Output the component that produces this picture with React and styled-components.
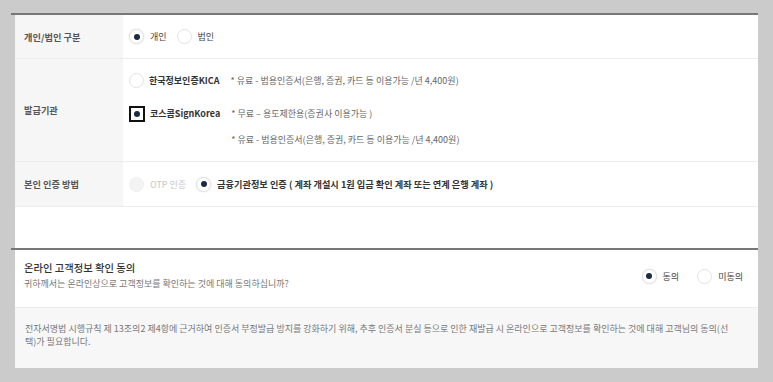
import styled, { createGlobalStyle } from "styled-components";

const GlobalStyle = createGlobalStyle`
  html, body {
    margin: 0;
    padding: 0;
    background: #cbcbcb;
  }
  body {
    font-family: "Noto Sans CJK KR", "Noto Sans", sans-serif;
    color: #444;
  }
`;

function Radio({ checked, disabled, focused }) {
  return (
    <RadioMark $checked={checked} $disabled={disabled} $focused={focused}>
      {checked ? <Dot /> : null}
    </RadioMark>
  );
}

function Choice({ checked, disabled, focused, children }) {
  return (
    <ChoiceLabel $disabled={disabled}>
      <Radio checked={checked} disabled={disabled} focused={focused} />
      <span>{children}</span>
    </ChoiceLabel>
  );
}

export default function App() {
  return (
    <>
      <GlobalStyle />
      <Page>
        <Panel>
          <Rule />
          <FormTable>
            <Row $height={44}>
              <Label>개인/법인 구분</Label>
              <Value>
                <Choice checked>개인</Choice>
                <Choice>법인</Choice>
              </Value>
            </Row>

            <Row>
              <Label>발급기관</Label>
              <IssuerList>
                <Issuer>
                  <Radio />
                  <IssuerName>한국정보인증KICA</IssuerName>
                  <DescList>
                    <Desc>* 유료 - 범용인증서(은행, 증권, 카드 등 이용가능 /년 4,400원)</Desc>
                  </DescList>
                </Issuer>
                <Issuer>
                  <Radio checked focused />
                  <IssuerName>코스콤SignKorea</IssuerName>
                  <DescList>
                    <Desc>* 무료 – 용도제한용(증권사 이용가능 )</Desc>
                    <Desc>* 유료 - 범용인증서(은행, 증권, 카드 등 이용가능 /년 4,400원)</Desc>
                  </DescList>
                </Issuer>
              </IssuerList>
            </Row>

            <Row $height={45}>
              <Label>본인 인증 방법</Label>
              <Value>
                <Choice disabled>OTP 인증</Choice>
                <Choice checked>
                  <strong>금융기관정보 인증 ( 계좌 개설시 1원 입금 확인 계좌 또는 연계 은행 계좌 )</strong>
                </Choice>
              </Value>
            </Row>
          </FormTable>

          <Blank />
          <Rule />

          <Consent>
            <div>
              <ConsentTitle>온라인 고객정보 확인 동의</ConsentTitle>
              <ConsentSub>귀하께서는 온라인상으로 고객정보를 확인하는 것에 대해 동의하십니까?</ConsentSub>
            </div>
            <ConsentChoices>
              <Choice checked>동의</Choice>
              <Choice>미동의</Choice>
            </ConsentChoices>
          </Consent>

          <Note>
            전자서명법 시행규칙 제 13조의2 제4항에 근거하여 인증서 부정발급 방지를 강화하기 위해, 추후 인증서 분실 등으로 인한 재발급 시 온라인으로 고객정보를 확인하는 것에 대해 고객님의 동의(선택)가 필요합니다.
          </Note>
        </Panel>
      </Page>
    </>
  );
}

const Page = styled.div`
  width: 773px;
  height: 382px;
  box-sizing: border-box;
  padding: 13px 0 0 15px;
  background: #cbcbcb;
  overflow: hidden;
`;

const Panel = styled.div`
  width: 743px;
  background: #fff;
`;

const Rule = styled.div`
  height: 2px;
  margin-left: -4px;
  background: #777;
`;

const FormTable = styled.div`
  display: flex;
  flex-direction: column;
`;

const Row = styled.div`
  display: grid;
  grid-template-columns: 108px 1fr;
  box-sizing: border-box;
  min-height: ${(p) => (p.$height ? `${p.$height}px` : "auto")};
  border-bottom: 1px solid #ececec;
`;

const Label = styled.div`
  display: flex;
  align-items: center;
  padding-left: 9px;
  background: #f6f6f6;
  font-size: 9.2px;
  font-weight: 700;
  color: #555;
`;

const Value = styled.div`
  display: flex;
  align-items: center;
  gap: 10px;
  padding-left: 6px;
`;

const ChoiceLabel = styled.label`
  display: inline-flex;
  align-items: center;
  gap: 6px;
  font-size: 9px;
  line-height: 15px;
  color: ${(p) => (p.$disabled ? "#c8c8c8" : "#444")};

  strong {
    font-size: 9.2px;
    font-weight: 700;
    color: #333;
  }
`;

const RadioMark = styled.span`
  display: inline-flex;
  align-items: center;
  justify-content: center;
  flex: none;
  box-sizing: border-box;
  width: ${(p) => (p.$focused ? "16px" : "15px")};
  height: ${(p) => (p.$focused ? "16px" : "15px")};
  border-radius: ${(p) => (p.$focused ? "0" : "50%")};
  border: ${(p) =>
    p.$focused ? "2px solid #111" : p.$disabled ? "1px solid #f1f1f1" : "1px solid #e2e2e2"};
  background: ${(p) => (p.$disabled ? "#f3f3f3" : "#fff")};
  box-shadow: ${(p) => (p.$checked && !p.$focused ? "0 0 2px rgba(0,0,0,0.12)" : "none")};
`;

const Dot = styled.span`
  width: 6px;
  height: 6px;
  border-radius: 50%;
  background: #1b2a47;
`;

const IssuerList = styled.div`
  display: flex;
  flex-direction: column;
  gap: 17px;
  padding: 14px 0 13px 6px;
`;

const Issuer = styled.div`
  display: flex;
  align-items: flex-start;
  gap: 5px;
`;

const IssuerName = styled.span`
  font-size: 9px;
  line-height: 16px;
  font-weight: 700;
  color: #333;
`;

const DescList = styled.div`
  display: flex;
  flex-direction: column;
  gap: 10px;
  margin-left: 6px;
`;

const Desc = styled.span`
  font-size: 9px;
  line-height: 16px;
  color: #666;
`;

const Blank = styled.div`
  height: 41px;
`;

const Consent = styled.div`
  display: flex;
  align-items: center;
  justify-content: space-between;
  padding: 11px 15px 16px 9px;
`;

const ConsentTitle = styled.div`
  font-size: 10.3px;
  line-height: 14px;
  font-weight: 500;
  color: #333;
`;

const ConsentSub = styled.div`
  margin-top: 2px;
  font-size: 9px;
  line-height: 14px;
  color: #777;
`;

const ConsentChoices = styled.div`
  display: flex;
  align-items: center;
  gap: 18px;
`;

const Note = styled.div`
  box-sizing: border-box;
  padding: 14px 20px 20px 10px;
  border-top: 1px solid #ececec;
  background: #f7f7f7;
  font-size: 9px;
  line-height: 13px;
  color: #777;
`;
